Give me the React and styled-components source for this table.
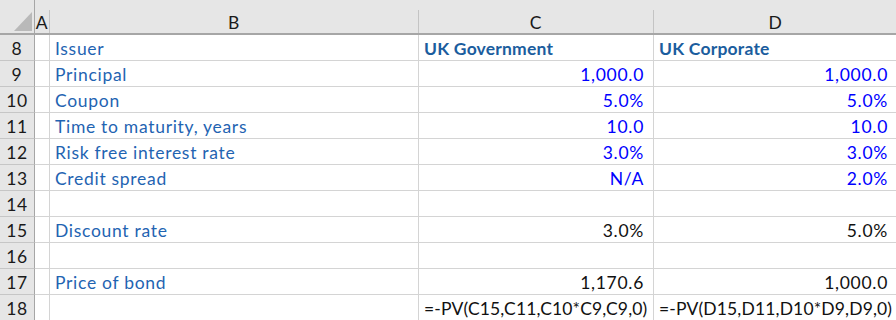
import React from 'react'
import styled, { createGlobalStyle } from 'styled-components'

const GlobalStyle = createGlobalStyle`
  body {
    margin: 0;
    background: #ffffff;
    overflow: hidden;
  }
`

const Sheet = styled.div`
  display: grid;
  grid-template-columns: 35px 15px 369px 235px 244px;
  grid-template-rows: 35px;
  grid-auto-rows: 26px;
  width: 898px;
  font-family: Lato, "Liberation Sans", sans-serif;
  font-size: 17.5px;
  letter-spacing: 0.7px;
`
const Corner = styled.div`
  background: #e6e6e6;
  border-bottom: 2px solid #a6a6a6;
  border-right: 1px solid #a6a6a6;
  box-sizing: border-box;
  display: flex;
  align-items: flex-end;
  justify-content: flex-end;
  padding: 0 2px 2px 0;
`
const ColHead = styled.div`
  background: #e6e6e6;
  border-bottom: 2px solid #a6a6a6;
  box-sizing: border-box;
  display: flex;
  align-items: flex-end;
`
const ColLabel = styled.div`
  flex: 1;
  height: 23px;
  padding-top: 1px;
  box-sizing: border-box;
  border-right: 1px solid #c4c4c4;
  display: flex;
  align-items: center;
  justify-content: center;
  color: #1a1a1a;
`
const RowHead = styled.div`
  background: #e6e6e6;
  border-right: 1px solid #a6a6a6;
  border-bottom: 1px solid #c6c6c6;
  box-sizing: border-box;
  padding-top: 1px;
  display: flex;
  align-items: center;
  justify-content: center;
  color: #1a1a1a;
`
const Cell = styled.div`
  border-right: 1px solid #d4d4d4;
  border-bottom: 1px solid #d4d4d4;
  box-sizing: border-box;
  display: flex;
  align-items: center;
  justify-content: ${p => (p.$right ? 'flex-end' : 'flex-start')};
  padding: ${p => (p.$right ? '1px 9px 0 4px' : '1px 4px 0 5px')};
  white-space: nowrap;
  overflow: visible;
  color: ${p => p.$tone === 'input' ? '#0000ff' : p.$tone === 'label' ? '#1f64b2' : p.$tone === 'head' ? '#1b5d9e' : '#111111'};
  font-weight: ${p => (p.$bold ? 700 : 400)};
  letter-spacing: ${p => (p.$bold ? '0.2px' : p.$formula ? '0.15px' : 'inherit')};
`

const rows = [
  { n: 8, label: 'Issuer', c: 'UK Government', d: 'UK Corporate', head: true },
  { n: 9, label: 'Principal', c: '1,000.0', d: '1,000.0', tone: 'input' },
  { n: 10, label: 'Coupon', c: '5.0%', d: '5.0%', tone: 'input' },
  { n: 11, label: 'Time to maturity, years', c: '10.0', d: '10.0', tone: 'input' },
  { n: 12, label: 'Risk free interest rate', c: '3.0%', d: '3.0%', tone: 'input' },
  { n: 13, label: 'Credit spread', c: 'N/A', d: '2.0%', tone: 'input' },
  { n: 14 },
  { n: 15, label: 'Discount rate', c: '3.0%', d: '5.0%' },
  { n: 16 },
  { n: 17, label: 'Price of bond', c: '1,170.6', d: '1,000.0' },
  { n: 18, c: '=-PV(C15,C11,C10*C9,C9,0)', d: '=-PV(D15,D11,D10*D9,D9,0)', formula: true },
]

const App = () => {
  return (
    <>
      <GlobalStyle />
      <Sheet>
        <Corner>
          <svg width="18" height="19" viewBox="0 0 18 19">
            <polygon points="18,0 18,19 0,19" fill="#b9b9b9" />
          </svg>
        </Corner>
        {['A', 'B', 'C', 'D'].map(l => (
          <ColHead key={l}><ColLabel>{l}</ColLabel></ColHead>
        ))}

        {rows.map(r => (
          <React.Fragment key={r.n}>
            <RowHead>{r.n}</RowHead>
            <Cell />
            <Cell $tone="label">{r.label}</Cell>
            {r.head ? (
              <>
                <Cell $tone="head" $bold>{r.c}</Cell>
                <Cell $tone="head" $bold>{r.d}</Cell>
              </>
            ) : (
              <>
                <Cell $right={!r.formula} $formula={r.formula} $tone={r.tone}>{r.c}</Cell>
                <Cell $right={!r.formula} $formula={r.formula} $tone={r.tone}>{r.d}</Cell>
              </>
            )}
          </React.Fragment>
        ))}
      </Sheet>
    </>
  )
}

export default App
